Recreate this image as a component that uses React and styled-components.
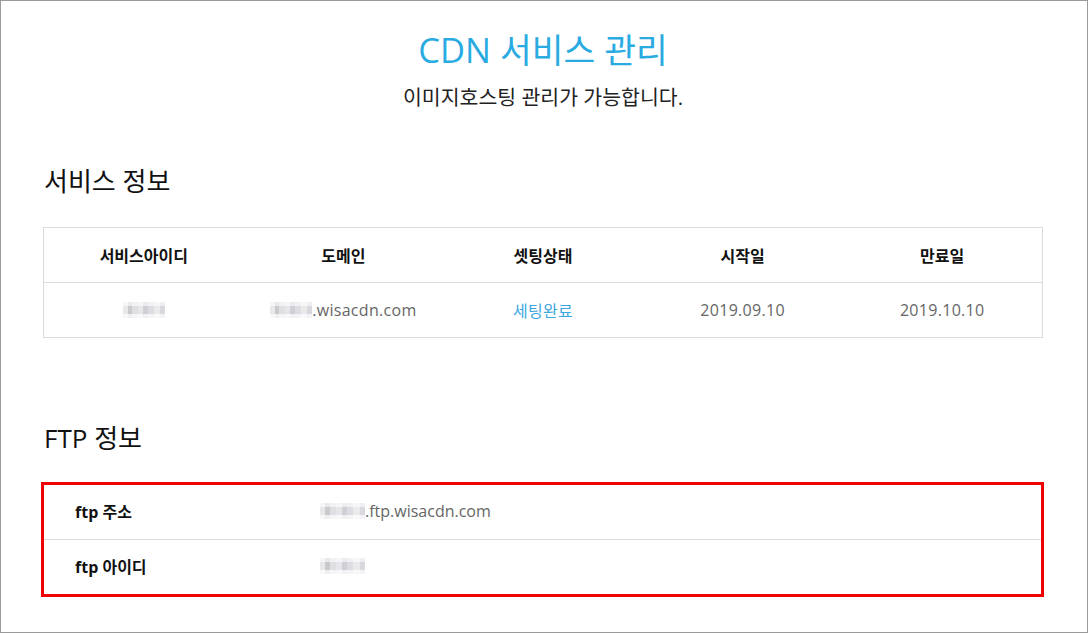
import React from "react";
import styled, { createGlobalStyle } from "styled-components";

const Global = createGlobalStyle`
  html, body { margin: 0; padding: 0; background: #fff; }
  body { font-family: "Open Sans", "Noto Sans CJK KR", sans-serif; color: #222; }
  * { box-sizing: border-box; }
`;

const Frame = styled.div`
  width: 1088px;
  height: 633px;
  border: 1px solid #9a9a9a;
  padding: 29px 0 0 42px;
  overflow: hidden;
`;

const Content = styled.div`
  width: 1000px;
  display: flex;
  flex-direction: column;
`;

const PageTitle = styled.h1`
  margin: 0;
  text-align: center;
  font-size: 34.5px;
  line-height: 40px;
  font-weight: 400;
  color: #29abe2;
`;

const Subtitle = styled.p`
  margin: 14px 0 0;
  text-align: center;
  font-size: 20.5px;
  line-height: 26px;
  color: #222;
`;

const SectionTitle = styled.h2`
  margin: ${(p) => p.$top}px 0 0 1px;
  font-size: 26px;
  line-height: 32px;
  font-weight: 400;
  color: #111;
`;

const Table = styled.div`
  margin-top: 30px;
  border: 1px solid #dcdcdc;
  display: grid;
  grid-template-columns: repeat(5, 1fr);
`;

const HeadCell = styled.div`
  height: 55px;
  display: flex;
  align-items: center;
  justify-content: center;
  font-size: 16px;
  font-weight: 700;
  color: #111;
  border-bottom: 1px solid #dcdcdc;
`;

const Cell = styled.div`
  height: 54px;
  display: flex;
  align-items: center;
  justify-content: center;
  font-size: 16px;
  letter-spacing: 0.3px;
  color: ${(p) => (p.$accent ? "#3aa8e0" : "#666")};
`;

const Masked = styled.span`
  display: inline-block;
  width: ${(p) => p.$w}px;
  height: 16px;
  background:
    linear-gradient(180deg, rgba(255,255,255,0.6) 0 25%, transparent 25% 75%, rgba(255,255,255,0.7) 75%),
    linear-gradient(90deg, #e8e8ea 0 12%, #c9c9ce 12% 22%, #dedee3 22% 36%, #e6e6ea 36% 48%, #cfd0d6 48% 60%, #dcdce2 60% 74%, #eaeaec 74% 88%, #d8d8de 88%);
`;

const FtpBox = styled.div`
  margin-top: 28px;
  margin-left: -2px;
  width: 1003px;
  border: 3px solid #f00000;
  display: flex;
  flex-direction: column;
`;

const FtpRow = styled.div`
  height: ${(p) => (p.$last ? 55 : 54)}px;
  padding-bottom: 3px;
  display: flex;
  align-items: center;
  border-top: ${(p) => (p.$last ? "1px solid #dcdcdc" : "none")};
`;

const FtpLabel = styled.div`
  width: 276px;
  padding-left: 31px;
  font-size: 16px;
  font-weight: 700;
  color: #111;
`;

const FtpValue = styled.div`
  display: flex;
  align-items: center;
  font-size: 16px;
  color: #666;
`;

export default function App() {
  return (
    <>
      <Global />
      <Frame>
        <Content>
          <PageTitle>CDN 서비스 관리</PageTitle>
          <Subtitle>이미지호스팅 관리가 가능합니다.</Subtitle>

          <SectionTitle $top={55}>서비스 정보</SectionTitle>
          <Table>
            <HeadCell>서비스아이디</HeadCell>
            <HeadCell>도메인</HeadCell>
            <HeadCell>셋팅상태</HeadCell>
            <HeadCell>시작일</HeadCell>
            <HeadCell>만료일</HeadCell>
            <Cell><Masked $w={42} /></Cell>
            <Cell><Masked $w={42} />.wisacdn.com</Cell>
            <Cell $accent>세팅완료</Cell>
            <Cell>2019.09.10</Cell>
            <Cell>2019.10.10</Cell>
          </Table>

          <SectionTitle $top={84}>FTP 정보</SectionTitle>
          <FtpBox>
            <FtpRow>
              <FtpLabel>ftp 주소</FtpLabel>
              <FtpValue><Masked $w={45} />.ftp.wisacdn.com</FtpValue>
            </FtpRow>
            <FtpRow $last>
              <FtpLabel>ftp 아이디</FtpLabel>
              <FtpValue><Masked $w={45} /></FtpValue>
            </FtpRow>
          </FtpBox>
        </Content>
      </Frame>
    </>
  );
}
